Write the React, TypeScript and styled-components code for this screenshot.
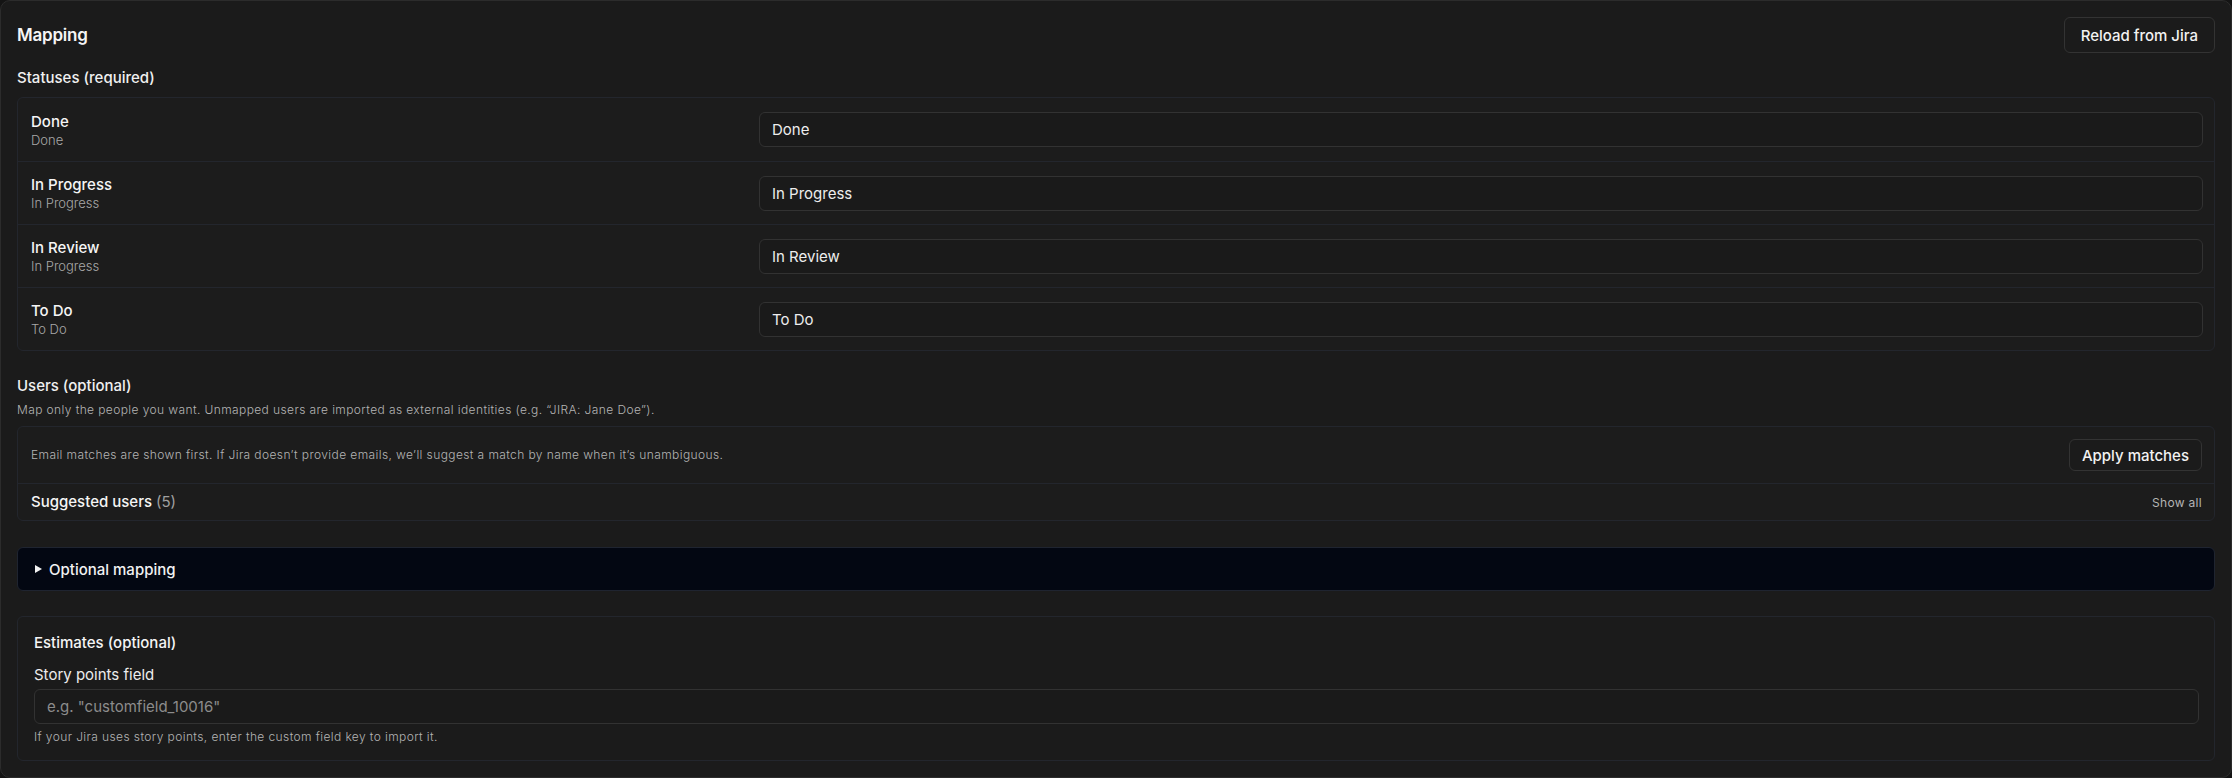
import React from 'react';
import styled, { createGlobalStyle } from 'styled-components';

const FONT = `'Inter', 'Noto Sans', sans-serif`;

const GlobalStyle = createGlobalStyle`
  html, body {
    margin: 0;
    padding: 0;
    background: #141414;
    font-family: ${FONT};
    color: #f2f2f2;
  }
  * { box-sizing: border-box; }
`;

const Card = styled.div`
  width: 2232px;
  height: 778px;
  background: #1b1b1b;
  border: 1px solid #2c2c2c;
  border-radius: 10px;
  padding: 16px;
  display: flex;
  flex-direction: column;
`;

const Header = styled.div`
  display: flex;
  align-items: center;
  justify-content: space-between;
  height: 36px;
`;

const Title = styled.h2`
  margin: 0;
  font-size: 17px;
  font-weight: 600;
  letter-spacing: -0.2px;
  color: #f5f5f5;
`;

const Button = styled.button<{ $h?: number; $px?: number }>`
  height: ${({ $h }) => $h ?? 36}px;
  padding: 0 ${({ $px }) => $px ?? 16}px;
  background: #1b1b1b;
  border: 1px solid #333333;
  border-radius: 6px;
  color: #f2f2f2;
  font-family: ${FONT};
  font-size: 15px;
  font-weight: 500;
`;

const SectionTitle = styled.div<{ $mt: number }>`
  margin-top: ${({ $mt }) => $mt}px;
  font-size: 15px;
  line-height: 20px;
  font-weight: 500;
  color: #f0f0f0;
`;

const Note = styled.div<{ $mt?: number }>`
  margin-top: ${({ $mt }) => $mt ?? 0}px;
  font-size: 12px;
  line-height: 16px;
  font-weight: 300;
  letter-spacing: 0.4px;
  color: #b4b4b4;
`;

const Box = styled.div<{ $mt: number }>`
  margin-top: ${({ $mt }) => $mt}px;
  border: 1px solid #23262d;
  border-radius: 6px;
  background: #1c1c1c;
`;

const StatusRow = styled.div`
  display: grid;
  grid-template-columns: minmax(0, 1fr) minmax(0, 2fr);
  column-gap: 6px;
  align-items: center;
  height: 63px;
  padding: 0 11px 0 13px;
  & + & {
    border-top: 1px solid #23262d;
  }
`;

const RowLabel = styled.div`
  display: flex;
  flex-direction: column;
`;

const LabelMain = styled.div`
  font-size: 15px;
  line-height: 20px;
  font-weight: 500;
  color: #f5f5f5;
`;

const LabelSub = styled.div`
  font-size: 13px;
  line-height: 16px;
  font-weight: 300;
  color: #a8a8a8;
`;

const Input = styled.input<{ $mt?: number }>`
  width: 100%;
  height: 35px;
  margin-top: ${({ $mt }) => $mt ?? 0}px;
  padding: 0 12px;
  background: #1a1a1a;
  border: 1px solid #323232;
  border-radius: 6px;
  color: #ededed;
  font-family: ${FONT};
  font-size: 15px;
  outline: none;
  &::placeholder {
    color: #8c8c8c;
  }
`;

const UserRow = styled.div<{ $h: number }>`
  display: flex;
  align-items: center;
  justify-content: space-between;
  height: ${({ $h }) => $h}px;
  padding: 0 12px 0 13px;
  & + & {
    border-top: 1px solid #23262d;
  }
`;

const Count = styled.span`
  color: #a0a0a0;
  font-weight: 400;
`;

const LinkText = styled.span`
  font-size: 12px;
  letter-spacing: 0.3px;
  color: #b4b4b4;
`;

const Disclosure = styled.div`
  margin-top: 26px;
  height: 44px;
  display: flex;
  align-items: center;
  gap: 7px;
  padding: 0 17px;
  background: #030712;
  border: 1px solid #1f2430;
  border-radius: 6px;
  font-size: 15px;
  font-weight: 500;
  color: #f2f2f2;
`;

const Caret = styled.span`
  width: 0;
  height: 0;
  border-top: 4px solid transparent;
  border-bottom: 4px solid transparent;
  border-left: 7px solid #f2f2f2;
`;

const Panel = styled.div`
  margin-top: 25px;
  height: 145px;
  border: 1px solid #23262d;
  border-radius: 6px;
  padding: 16px 15px 0 16px;
`;

const FieldLabel = styled.div`
  margin-top: 12px;
  font-size: 15px;
  line-height: 20px;
  color: #ececec;
`;

const statuses = [
  { name: 'Done', cat: 'Done' },
  { name: 'In Progress', cat: 'In Progress' },
  { name: 'In Review', cat: 'In Progress' },
  { name: 'To Do', cat: 'To Do' },
];

export default function App() {
  return (
    <>
      <GlobalStyle />
      <Card>
        <Header>
          <Title>Mapping</Title>
          <Button>Reload from Jira</Button>
        </Header>

        <SectionTitle $mt={15}>Statuses (required)</SectionTitle>
        <Box $mt={9}>
          {statuses.map((s) => (
            <StatusRow key={s.name}>
              <RowLabel>
                <LabelMain>{s.name}</LabelMain>
                <LabelSub>{s.cat}</LabelSub>
              </RowLabel>
              <Input defaultValue={s.name} />
            </StatusRow>
          ))}
        </Box>

        <SectionTitle $mt={25}>Users (optional)</SectionTitle>
        <Note $mt={6}>
          Map only the people you want. Unmapped users are imported as external identities (e.g. “JIRA: Jane Doe”).
        </Note>
        <Box $mt={8}>
          <UserRow $h={56}>
            <Note>
              Email matches are shown first. If Jira doesn’t provide emails, we’ll suggest a match by name when it’s
              unambiguous.
            </Note>
            <Button $h={32} $px={12}>
              Apply matches
            </Button>
          </UserRow>
          <UserRow $h={37}>
            <LabelMain>
              Suggested users <Count>(5)</Count>
            </LabelMain>
            <LinkText>Show all</LinkText>
          </UserRow>
        </Box>

        <Disclosure>
          <Caret />
          Optional mapping
        </Disclosure>

        <Panel>
          <LabelMain>Estimates (optional)</LabelMain>
          <FieldLabel>Story points field</FieldLabel>
          <Input placeholder='e.g. "customfield_10016"' $mt={4} />
          <Note $mt={5}>If your Jira uses story points, enter the custom field key to import it.</Note>
        </Panel>
      </Card>
    </>
  );
}
